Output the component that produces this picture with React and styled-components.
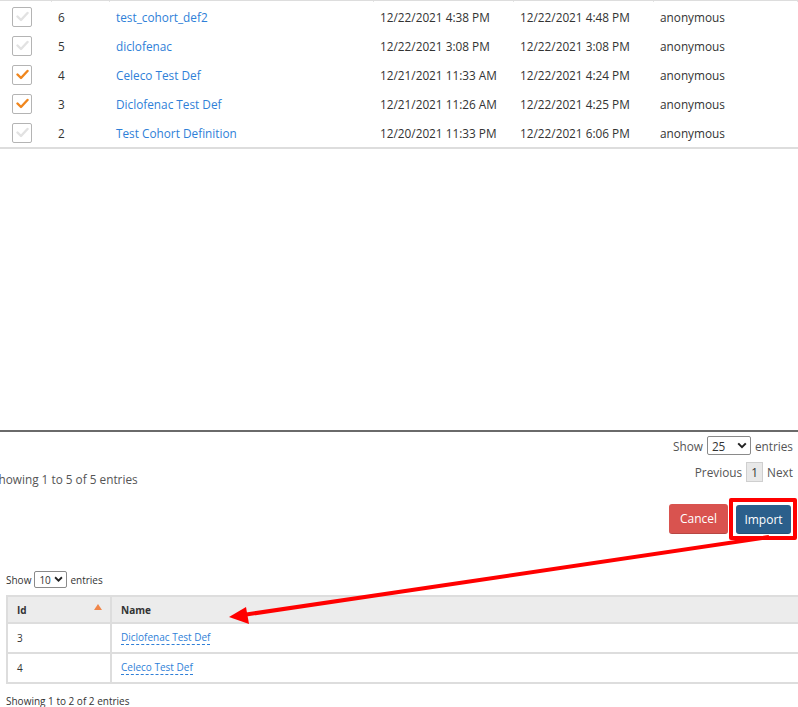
import React from 'react'
import styled, { createGlobalStyle } from 'styled-components'

const GlobalStyle = createGlobalStyle`
  html, body {
    margin: 0;
    padding: 0;
    background: #fff;
  }
  body {
    font-family: "Open Sans", "Noto Sans", sans-serif;
    color: #333;
    overflow: hidden;
  }
`

const Page = styled.div`
  position: relative;
  width: 798px;
  height: 707px;
  overflow: hidden;
`

const cols = '52px 58px 264px 140px 140px 1fr'

const HeadStub = styled.div`
  display: grid;
  grid-template-columns: ${cols};
  height: 1px;
  border-top: 1px solid #ddd;
  & > div {
    border-right: 1px solid #e4e4e4;
  }
`

const Row = styled.div`
  display: grid;
  grid-template-columns: ${cols};
  align-items: center;
  height: 29px;
  font-size: 11.8px;
  border-bottom: ${p => (p.$last ? '2px solid #ddd' : 'none')};
`

const Cell = styled.div`
  padding-left: ${p => p.$pad || 6}px;
  white-space: nowrap;
`

const Box = styled.span`
  display: flex;
  align-items: center;
  justify-content: center;
  width: 18px;
  height: 18px;
  border: 1px solid #b4b4b4;
  border-radius: 2px;
  background: #fff;
`

const Link = styled.a`
  color: #2f7fd8;
  text-decoration: none;
`

const Check = ({ on }) => (
  <Box>
    <svg width="13" height="11" viewBox="0 0 13 11">
      <path
        d="M1.5 5.5 L5 9 L11.5 2"
        fill="none"
        stroke={on ? '#f0861d' : '#e2e2e2'}
        strokeWidth="2.4"
        strokeLinecap="round"
        strokeLinejoin="round"
      />
    </svg>
  </Box>
)

const Spacer = styled.div`
  height: 281px;
`

const Footer = styled.div`
  border-top: 2px solid #6a6a6a;
  display: flex;
  justify-content: space-between;
  font-size: 11.8px;
  color: #555;
`

const Info = styled.div`
  margin-left: -8px;
  padding-top: 39px;
`

const Controls = styled.div`
  display: flex;
  flex-direction: column;
  align-items: flex-end;
  padding: 4px 5px 0 0;
  gap: 7px;
`

const Inline = styled.div`
  display: flex;
  align-items: center;
  gap: ${p => p.$gap || 4}px;
`

const Select = styled.span`
  display: inline-flex;
  align-items: center;
  justify-content: space-between;
  box-sizing: border-box;
  width: ${p => p.$w}px;
  height: ${p => p.$h}px;
  padding: 0 3px 0 4px;
  border: 1px solid #8a8a8a;
  border-radius: 2px;
  color: #333;
  font-size: inherit;
`

const Chevron = ({ size = 10 }) => (
  <svg width={size} height={size * 0.7} viewBox="0 0 10 7">
    <path d="M1.2 1.4 L5 5.2 L8.8 1.4" fill="none" stroke="#222" strokeWidth="2" />
  </svg>
)

const PageNum = styled.span`
  display: inline-flex;
  align-items: center;
  justify-content: center;
  width: 15px;
  height: 18px;
  background: #e8e8e8;
  border: 1px solid #cfcfcf;
  color: #333;
`

const Buttons = styled.div`
  display: flex;
  justify-content: flex-end;
  align-items: center;
  gap: 1px;
  margin-top: 11px;
`

const Button = styled.button`
  font-family: inherit;
  font-size: 12px;
  color: #fff;
  border: none;
  border-radius: 3px;
  height: ${p => p.$h}px;
  width: ${p => p.$w}px;
  background: ${p => p.$bg};
  border-bottom: 1px solid rgba(0, 0, 0, 0.15);
`

const Highlight = styled.div`
  border: 4px solid #ff0000;
  border-radius: 2px;
  padding: 3px 2px 2px 3px;
  margin-right: 1px;
`

const Lower = styled.div`
  margin-top: 31px;
  padding-left: 6px;
  font-size: 10px;
  color: #333;
`

const SmallTable = styled.div`
  margin-top: 7px;
  border-left: 2px solid #ddd;
`

const SRow = styled.div`
  box-sizing: border-box;
  display: grid;
  grid-template-columns: 102px 1fr;
  height: ${p => (p.$head ? 29 : 30)}px;
  background: ${p => (p.$head ? '#ececec' : '#fff')};
  border-top: ${p => (p.$head ? '2px solid #ddd' : 'none')};
  border-bottom: 2px solid #ddd;
  font-size: 10px;
  font-weight: ${p => (p.$head ? 700 : 400)};
  & > div + div {
    border-left: 2px solid #ddd;
  }
`

const SCell = styled.div`
  position: relative;
  display: flex;
  align-items: center;
  padding-left: 9px;
`

const SortArrow = styled.span`
  position: absolute;
  right: 8px;
  top: 7px;
  width: 0;
  height: 0;
  border-left: 4px solid transparent;
  border-right: 4px solid transparent;
  border-bottom: 6px solid #f0864a;
`

const DotLink = styled.a`
  color: #2f7fd8;
  text-decoration: none;
  border-bottom: 1px dashed #2f7fd8;
  line-height: 13px;
`

const Summary = styled.div`
  margin-top: 10px;
  font-size: 10px;
  color: #333;
`

const Overlay = styled.svg`
  position: absolute;
  left: 0;
  top: 0;
  pointer-events: none;
`

const rows = [
  { id: 6, name: 'test_cohort_def2', created: '12/22/2021 4:38 PM', modified: '12/22/2021 4:48 PM' },
  { id: 5, name: 'diclofenac', created: '12/22/2021 3:08 PM', modified: '12/22/2021 3:08 PM' },
  { id: 4, name: 'Celeco Test Def', created: '12/21/2021 11:33 AM', modified: '12/22/2021 4:24 PM', on: true },
  { id: 3, name: 'Diclofenac Test Def', created: '12/21/2021 11:26 AM', modified: '12/22/2021 4:25 PM', on: true },
  { id: 2, name: 'Test Cohort Definition', created: '12/20/2021 11:33 PM', modified: '12/22/2021 6:06 PM' },
]

const picked = [
  { id: 3, name: 'Diclofenac Test Def' },
  { id: 4, name: 'Celeco Test Def' },
]

export default function App() {
  return (
    <Page>
      <GlobalStyle />
      <HeadStub>
        <div /><div /><div /><div /><div /><div />
      </HeadStub>
      {rows.map((r, i) => (
        <Row key={r.id} $last={i === rows.length - 1}>
          <Cell $pad={12}><Check on={r.on} /></Cell>
          <Cell>{r.id}</Cell>
          <Cell><Link>{r.name}</Link></Cell>
          <Cell>{r.created}</Cell>
          <Cell>{r.modified}</Cell>
          <Cell>anonymous</Cell>
        </Row>
      ))}
      <Spacer />
      <Footer>
        <Info>Showing 1 to 5 of 5 entries</Info>
        <Controls>
          <Inline>
            Show
            <Select $w={44} $h={19}>25 <Chevron /></Select>
            entries
          </Inline>
          <Inline $gap={4}>
            Previous
            <PageNum>1</PageNum>
            Next
          </Inline>
        </Controls>
      </Footer>
      <Buttons>
        <Button $w={59} $h={30} $bg="#d9534f">Cancel</Button>
        <Highlight>
          <Button $w={55} $h={29} $bg="#2b5f8b">Import</Button>
        </Highlight>
      </Buttons>
      <Lower>
        <Inline $gap={3}>
          Show
          <Select $w={33} $h={17}>10 <Chevron size={9} /></Select>
          entries
        </Inline>
        <SmallTable>
          <SRow $head>
            <SCell>Id<SortArrow /></SCell>
            <SCell>Name</SCell>
          </SRow>
          {picked.map(p => (
            <SRow key={p.id}>
              <SCell>{p.id}</SCell>
              <SCell><DotLink>{p.name}</DotLink></SCell>
            </SRow>
          ))}
        </SmallTable>
        <Summary>Showing 1 to 2 of 2 entries</Summary>
      </Lower>
      <Overlay width="798" height="707" viewBox="0 0 798 707">
        <line x1="769" y1="537" x2="243" y2="615" stroke="#ff0000" strokeWidth="4" />
        <polygon points="229,617 246,607 249,624" fill="#ff0000" />
      </Overlay>
    </Page>
  )
}
